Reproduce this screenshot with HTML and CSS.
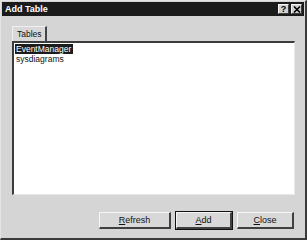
FILE: index.html
```html
<!DOCTYPE html>
<html lang="en">
<head>
    <meta charset="UTF-8">
    <title>Add Table</title>
    <link rel="stylesheet" href="styles.css">
</head>
<body>
    <div class="window">
        <div class="titlebar">
            <span class="title">Add Table</span>
            <div class="caption-btns">
                <span class="cbtn">?</span>
                <span class="cbtn close">
                    <svg width="8" height="7" viewBox="0 0 8 7"><path d="M1 0.5 L7 6.5 M7 0.5 L1 6.5" stroke="#000" stroke-width="1.6"/></svg>
                </span>
            </div>
        </div>
        <div class="content">
            <div class="tabs">
                <span class="tab">Tables</span>
            </div>
            <div class="listbox">
                <div class="item selected">EventManager</div>
                <div class="item">sysdiagrams</div>
            </div>
            <div class="buttons">
                <button class="btn refresh"><u>R</u>efresh</button>
                <button class="btn add default"><u>A</u>dd</button>
                <button class="btn close-btn"><u>C</u>lose</button>
            </div>
        </div>
    </div>
</body>
</html>
```

FILE: styles.css
```css
body {
    margin: 0;
    font-family: "Liberation Sans", Arial, sans-serif;
    font-size: 9px;
    background: #ffffff;
}
.window {
    width: 307px;
    height: 240px;
    box-sizing: border-box;
    background: #d5d5d5;
    border-top: 1px solid #e4e4e4;
    border-left: 1px solid #e4e4e4;
    border-right: 2px solid #3a3a3a;
    border-bottom: 2px solid #3a3a3a;
    padding: 1px;
    display: flex;
    flex-direction: column;
}
/* barre de titre */
.titlebar {
    height: 14px;
    background: #1b1b1b;
    display: flex;
    align-items: center;
    justify-content: space-between;
    padding: 0 2px 0 3px;
}
.title {
    color: #ffffff;
    font-weight: bold;
    font-size: 9px;
}
.caption-btns {
    display: flex;
    gap: 1px;
}
.cbtn {
    width: 11px;
    height: 10px;
    box-sizing: border-box;
    background: #d0d0d0;
    border-top: 1px solid #f4f4f4;
    border-left: 1px solid #f4f4f4;
    border-right: 1px solid #404040;
    border-bottom: 1px solid #404040;
    display: flex;
    align-items: center;
    justify-content: center;
    font-weight: bold;
    font-size: 9px;
    line-height: 8px;
    color: #000;
}
.close {
    margin-left: 1px;
}
.content {
    flex: 1;
    padding: 10px 9px 0 10px;
    display: flex;
    flex-direction: column;
}
.tabs {
    display: flex;
    height: 15px;
}
.tab {
    width: 35px;
    box-sizing: border-box;
    border-top: 1px solid #f0f0f0;
    border-left: 1px solid #f0f0f0;
    border-right: 2px solid #454545;
    padding: 2px 0 0 4px;
    font-size: 8.5px;
    color: #111;
    background: #d8d8d8;
}
/* liste des tables */
.listbox {
    height: 154px;
    box-sizing: border-box;
    background: #ffffff;
    border-top: 2px solid #3c3c3c;
    border-left: 2px solid #3c3c3c;
    border-right: 1px solid #e8e8e8;
    border-bottom: 1px solid #e8e8e8;
    padding: 1px 0 0 1px;
}
.item {
    height: 10px;
    line-height: 10px;
    font-size: 8.5px;
    color: #111;
    padding-left: 1px;
    width: fit-content;
    padding-right: 2px;
}
.item.selected {
    background: #1c1c1c;
    color: #ffffff;
}
.buttons {
    display: flex;
    justify-content: flex-end;
    gap: 5px;
    margin-top: 17px;
    padding-right: 1px;
}
.btn {
    height: 17px;
    box-sizing: border-box;
    font-family: "Liberation Sans", Arial, sans-serif;
    font-size: 9px;
    color: #111;
    background: #d8d8d8;
    border-top: 1px solid #f6f6f6;
    border-left: 1px solid #f6f6f6;
    border-right: 2px solid #404040;
    border-bottom: 2px solid #404040;
    padding: 0;
}
.refresh {
    width: 72px;
}
.add {
    width: 56px;
}
.close-btn {
    width: 57px;
}
.btn.default {
    outline: 1px solid #111;
}
```
